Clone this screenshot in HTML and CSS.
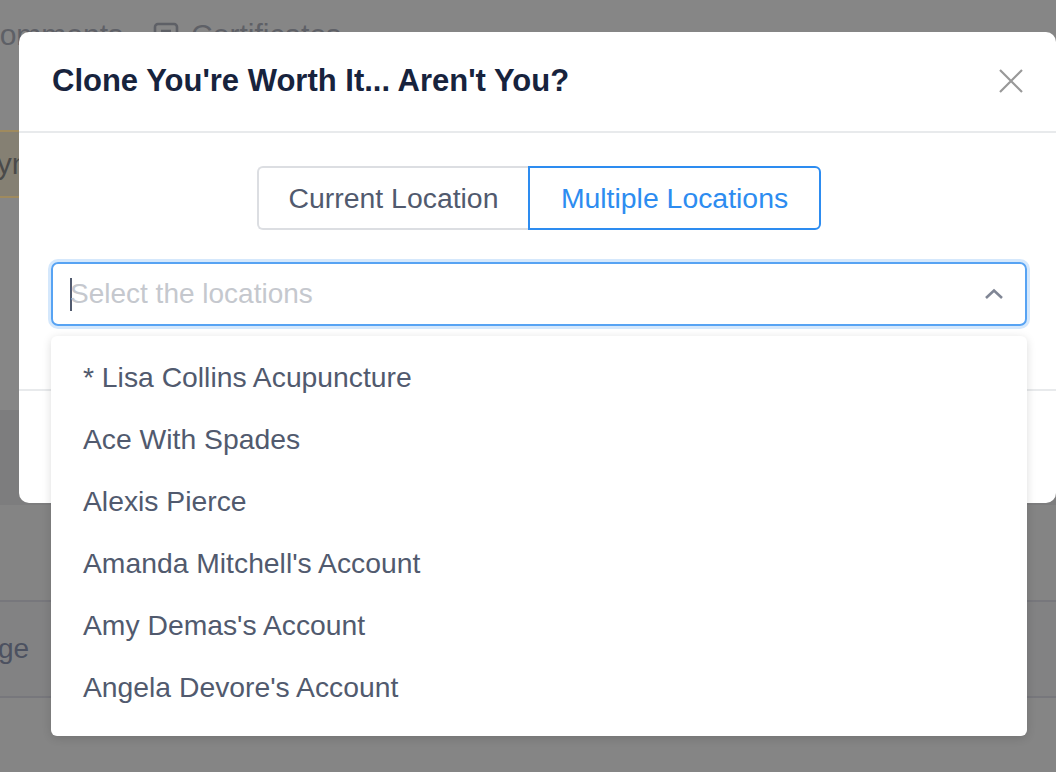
FILE: index.html
```html
<!DOCTYPE html>
<html>
<head>
<meta charset="utf-8">
<link rel="stylesheet" href="styles.css">
</head>
<body>
<div class="page">
  <div class="tabs">
    <span class="tab">Comments</span>
    <span class="tab tab-cert">
      <svg class="tab-icon" width="26" height="26" viewBox="0 0 26 26"><rect x="2" y="2" width="22" height="20" rx="3" fill="none" stroke="#5e6066" stroke-width="2.6"/><path d="M8 9h10M8 14h10" stroke="#5e6066" stroke-width="2.6"/></svg>
      Certificates
    </span>
  </div>
  <div class="notice"><span>Paym</span></div>
  <div class="band"></div>
  <div class="gap"></div>
  <div class="row"><span>Change</span></div>
  <div class="row-end"></div>

  <div class="modal">
    <div class="modal-header">
      <h2 class="modal-title">Clone You're Worth It... Aren't You?</h2>
      <svg class="close" width="26" height="26" viewBox="0 0 26 26"><path d="M2 2L24 24M24 2L2 24" stroke="#999" stroke-width="2.2"/></svg>
    </div>
    <div class="modal-body">
      <div class="toggle">
        <button class="seg">Current Location</button>
        <button class="seg seg-active">Multiple Locations</button>
      </div>
      <div class="select">
        <span class="caret"></span>
        <span class="placeholder">Select the locations</span>
        <svg class="chev" width="20" height="12" viewBox="0 0 20 12"><path d="M2 10L10 2.5L18 10" fill="none" stroke="#808695" stroke-width="2.6"/></svg>
      </div>
    </div>
    <div class="modal-footer"></div>
  </div>

  <ul class="dropdown">
    <li>* Lisa Collins Acupuncture</li>
    <li>Ace With Spades</li>
    <li>Alexis Pierce</li>
    <li>Amanda Mitchell's Account</li>
    <li>Amy Demas's Account</li>
    <li>Angela Devore's Account</li>
  </ul>
</div>
</body>
</html>
```

FILE: styles.css
```css
* { box-sizing: border-box; }
html, body { margin: 0; padding: 0; }
body {
  font-family: "Liberation Sans", Arial, Helvetica, sans-serif;
  background: #868686;
}
.page {
  position: relative;
  width: 1056px;
  height: 772px;
  overflow: hidden;
  background: #868686;
}
.tabs {
  display: flex;
  align-items: center;
  gap: 30px;
  margin-left: -22px;
  height: 60px;
  padding-top: 9px;
  font-size: 30px;
  color: #5e6066;
}
.tab-cert { display: flex; align-items: center; gap: 12px; }
.tab-icon { display: block; }
.notice {
  margin-top: 70px;
  height: 68px;
  margin-left: -60px;
  padding-left: 20px;
  width: 240px;
  background: #858073;
  border-top: 2px solid #9f8a5e;
  border-bottom: 2px solid #9f8a5e;
  display: flex;
  align-items: center;
  font-size: 30px;
  color: #4a4a4a;
}
.band {
  margin-top: 212px;
  height: 95px;
  background: #7d7d7e;
}
.gap {
  height: 97px;
  background: #848484;
  border-bottom: 2px solid #77777c;
}
.row {
  height: 96px;
  background: #828283;
  border-bottom: 2px solid #77777c;
  display: flex;
  align-items: center;
  font-size: 28px;
  color: #4c5160;
  margin-left: -69px;
}
.row-end { height: 80px; background: #858585; }

.modal {
  position: absolute;
  left: 19px;
  top: 32px;
  width: 1037px;
  height: 471px;
  background: #fff;
  border-radius: 10px;
  display: flex;
  flex-direction: column;
}
.modal-header {
  height: 101px;
  border-bottom: 2px solid #e8eaec;
  display: flex;
  align-items: center;
  justify-content: space-between;
  padding: 0 32px 2px 33px;
}
.modal-title {
  margin: 0;
  font-size: 31px;
  font-weight: bold;
  color: #17233d;
}
.close { display: block; }
.modal-body {
  height: 258px;
  border-bottom: 2px solid #e8eaec;
  padding: 33px 29px 0 32px;
  display: flex;
  flex-direction: column;
  align-items: center;
}
.toggle {
  display: flex;
  height: 64px;
}
.seg {
  font-family: inherit;
  font-size: 28.4px;
  background: #fff;
  color: #515a6e;
  border: 2px solid #dcdee2;
  padding: 0;
  margin: 0;
  height: 64px;
  cursor: pointer;
}
.seg:first-child {
  border-radius: 6px 0 0 6px;
  border-right: none;
  width: 271px;
}
.seg-active {
  color: #2d8cf0;
  border-color: #2d8cf0;
  border-radius: 0 6px 6px 0;
  width: 293px;
}
.select {
  margin-top: 32px;
  align-self: stretch;
  height: 64px;
  border: 2px solid #57a3f3;
  border-radius: 7px;
  box-shadow: 0 0 0 3px #d5e8fc;
  display: flex;
  align-items: center;
  padding: 0 21px 0 17px;
}
.caret {
  width: 2px;
  height: 33px;
  background: #515a6e;
  margin-right: -2px;
}
.placeholder {
  flex: 1;
  font-size: 28px;
  color: #c5c8ce;
}
.chev { display: block; }
.modal-footer { flex: 1; }

.dropdown {
  position: absolute;
  left: 51px;
  top: 336px;
  width: 976px;
  margin: 0;
  padding: 10px 0 18px;
  list-style: none;
  background: #fff;
  border-radius: 6px;
  box-shadow: 0 2px 10px rgba(0,0,0,0.14);
}
.dropdown li {
  height: 62px;
  display: flex;
  align-items: center;
  padding-left: 32px;
  font-size: 28.3px;
  color: #515a6e;
}
```
